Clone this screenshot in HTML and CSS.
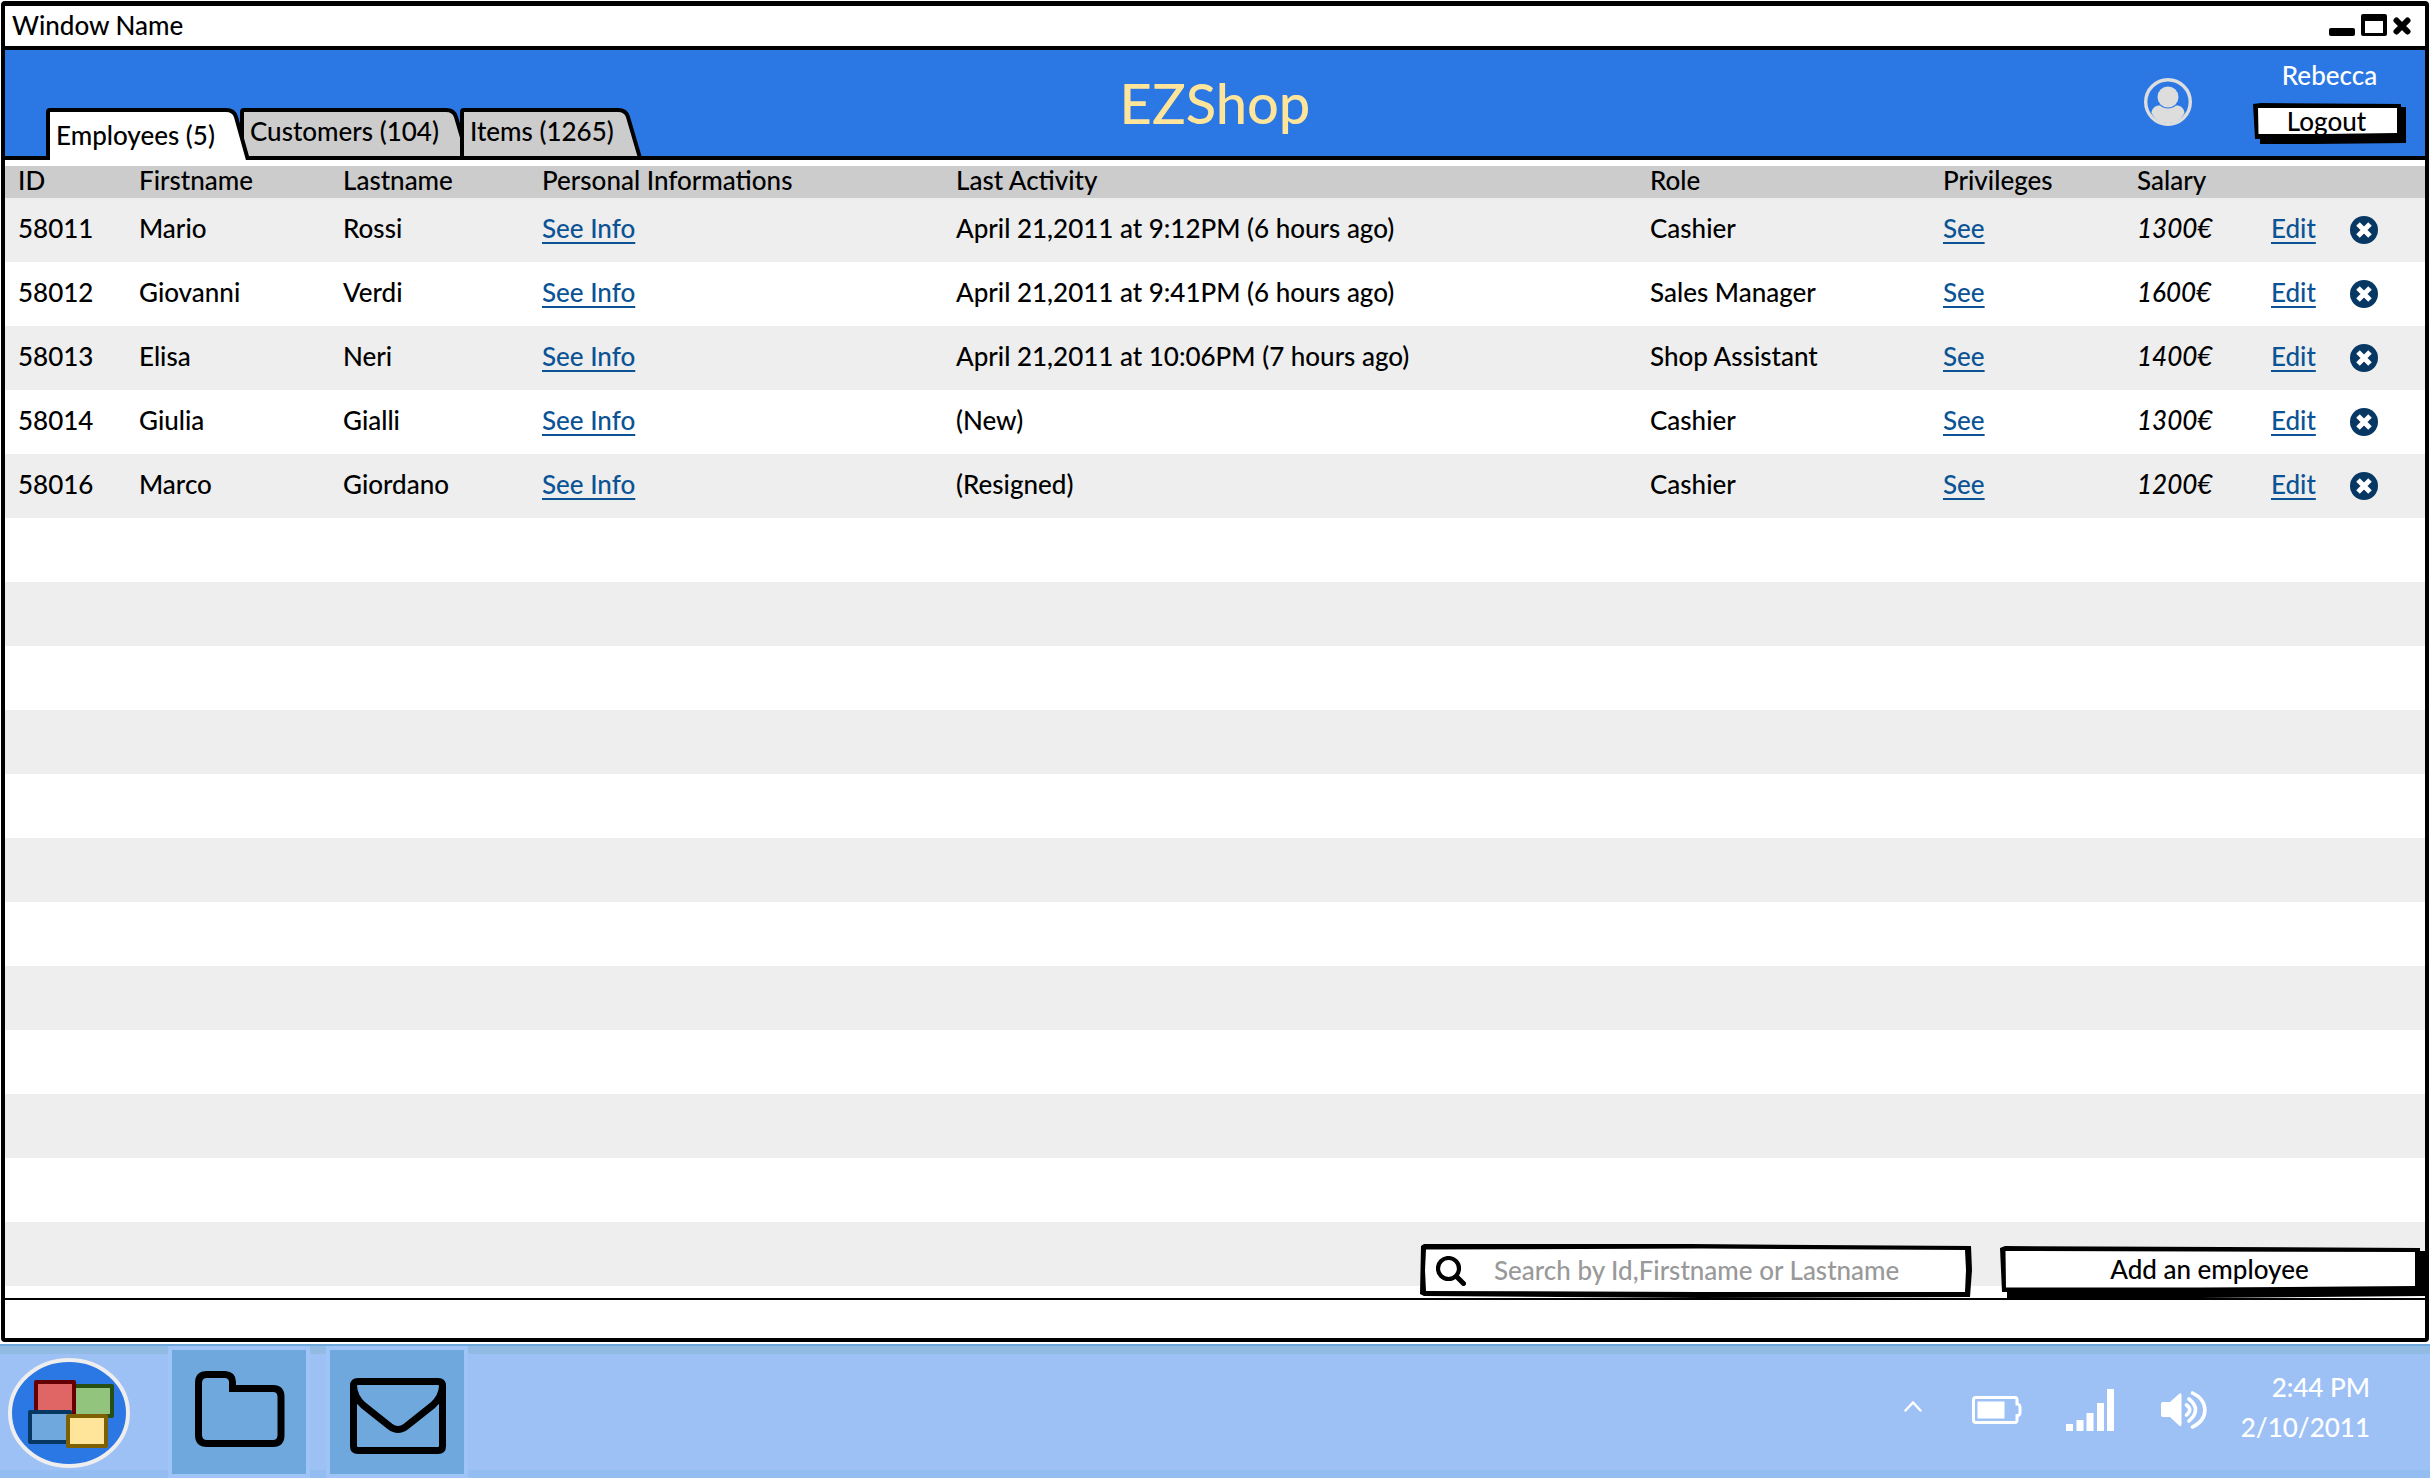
FILE: index.html
```html
<!DOCTYPE html>
<html lang="en">
<head>
<meta charset="utf-8">
<meta name="viewport" content="width=device-width, initial-scale=1">
<title>EZShop</title>
<link rel="stylesheet" href="styles.css">
</head>
<body>
<div class="window">
  <header class="titlebar">
    <span>Window Name</span>
    <div class="controls">
      <button type="button" aria-label="Minimize"><svg width="26" height="22" viewBox="0 0 26 22"><rect y="14" width="26" height="8" rx="2"/></svg></button>
      <button type="button" aria-label="Maximize"><svg width="26" height="22" viewBox="0 0 26 22"><path fill-rule="evenodd" d="M2 0H24Q26 0 26 2V20Q26 22 24 22H2Q0 22 0 20V2Q0 0 2 0ZM4 7V19H22V7Z"/></svg></button>
      <button type="button" aria-label="Close"><svg width="18" height="22" viewBox="0 0 18 22"><path d="M3.500 6.500L14.500 17.500M14.500 6.500L3.500 17.500" fill="none" stroke="#000" stroke-width="6" stroke-linecap="round"/></svg></button>
    </div>
  </header>

  <div class="appbar">
    <nav class="tabs">
      <a class="tab active" href="#employees"><svg class="shape" viewBox="0 0 204 52" preserveAspectRatio="none"><path d="M2 52V4Q2 2 4 2H180Q188 2 190 9L202 52" fill="#fff" stroke="#000" stroke-width="4"/></svg><span>Employees (5)</span></a>
      <a class="tab tab-customers" href="#customers"><svg class="shape" viewBox="0 0 230 52" preserveAspectRatio="none"><path d="M2 50V4Q2 2 4 2H206Q214 2 216 9L228 50Z" fill="#ccc" stroke="#000" stroke-width="4"/></svg><span>Customers (104)</span></a>
      <a class="tab tab-items" href="#items"><svg class="shape" viewBox="0 0 182 52" preserveAspectRatio="none"><path d="M2 50V4Q2 2 4 2H158Q166 2 168 9L180 50Z" fill="#ccc" stroke="#000" stroke-width="4"/></svg><span>Items (1265)</span></a>
    </nav>
    <h1>EZShop</h1>
    <div class="user">
      <svg class="avatar" width="48" height="48" viewBox="0 0 48 48"><circle cx="24" cy="24" r="22.300" fill="none" stroke="#ddd" stroke-width="3.400"/><circle cx="24" cy="19" r="10.500" fill="#ddd"/><path d="M7.500 35C8 30 11 27.500 16 27.500C20 31.500 28 31.500 32 27.500C37 27.500 40 30 40.500 35C37 42 31 45 24 45S11 42 7.500 35Z" fill="#ddd"/></svg>
      <div class="account">
        <span>Rebecca</span>
        <button type="button" class="sketch logout"><svg class="shape" viewBox="0 0 153 41" preserveAspectRatio="none"><path d="M7 4H153V40L60 41H7Z"/><path d="M0 1L8 0L148 1V35L2 36Z"/><path d="M5 5L144 5V30L70 31H5.500Z" fill="#fff"/></svg><span>Logout</span></button>
      </div>
    </div>
  </div>

  <main class="content">
    <table>
      <colgroup><col class="c-id"><col class="c-first"><col class="c-last"><col class="c-info"><col><col class="c-role"><col class="c-priv"><col class="c-salary"><col class="c-edit"><col class="c-delete"></colgroup>
      <thead><tr><th>ID</th><th>Firstname</th><th>Lastname</th><th>Personal Informations</th><th>Last Activity</th><th>Role</th><th>Privileges</th><th>Salary</th><th></th><th></th></tr></thead>
      <tbody>
        <tr><td>58011</td><td>Mario</td><td>Rossi</td><td><a href="#info">See Info</a></td><td>April 21,2011 at 9:12PM (6 hours ago)</td><td>Cashier</td><td><a href="#priv">See</a></td><td><em>1300€</em></td><td><a href="#edit">Edit</a></td><td><button type="button" class="delete" aria-label="Delete"><svg width="28" height="28" viewBox="0 0 28 28"><circle cx="14" cy="14" r="14"/><path d="M8 8L20 20M20 8L8 20"/></svg></button></td></tr>
        <tr><td>58012</td><td>Giovanni</td><td>Verdi</td><td><a href="#info">See Info</a></td><td>April 21,2011 at 9:41PM (6 hours ago)</td><td>Sales Manager</td><td><a href="#priv">See</a></td><td><em>1600€</em></td><td><a href="#edit">Edit</a></td><td><button type="button" class="delete" aria-label="Delete"><svg width="28" height="28" viewBox="0 0 28 28"><circle cx="14" cy="14" r="14"/><path d="M8 8L20 20M20 8L8 20"/></svg></button></td></tr>
        <tr><td>58013</td><td>Elisa</td><td>Neri</td><td><a href="#info">See Info</a></td><td>April 21,2011 at 10:06PM (7 hours ago)</td><td>Shop Assistant</td><td><a href="#priv">See</a></td><td><em>1400€</em></td><td><a href="#edit">Edit</a></td><td><button type="button" class="delete" aria-label="Delete"><svg width="28" height="28" viewBox="0 0 28 28"><circle cx="14" cy="14" r="14"/><path d="M8 8L20 20M20 8L8 20"/></svg></button></td></tr>
        <tr><td>58014</td><td>Giulia</td><td>Gialli</td><td><a href="#info">See Info</a></td><td>(New)</td><td>Cashier</td><td><a href="#priv">See</a></td><td><em>1300€</em></td><td><a href="#edit">Edit</a></td><td><button type="button" class="delete" aria-label="Delete"><svg width="28" height="28" viewBox="0 0 28 28"><circle cx="14" cy="14" r="14"/><path d="M8 8L20 20M20 8L8 20"/></svg></button></td></tr>
        <tr><td>58016</td><td>Marco</td><td>Giordano</td><td><a href="#info">See Info</a></td><td>(Resigned)</td><td>Cashier</td><td><a href="#priv">See</a></td><td><em>1200€</em></td><td><a href="#edit">Edit</a></td><td><button type="button" class="delete" aria-label="Delete"><svg width="28" height="28" viewBox="0 0 28 28"><circle cx="14" cy="14" r="14"/><path d="M8 8L20 20M20 8L8 20"/></svg></button></td></tr>
      </tbody>
    </table>
    <div class="empty-rows">
      <div class="search">
        <svg class="shape" viewBox="0 0 552 54" preserveAspectRatio="none"><path d="M1 2L4 0H270L551 2L552 26L550 53L280 54L4 52L0 50Z"/><path d="M6 5.500L280 4.500L545 6L546 26L545 48H280L6 47L5 26Z" fill="#fff"/></svg>
        <svg class="glass" width="30" height="30" viewBox="0 0 30 30" fill="none" stroke="#000"><circle cx="12.500" cy="12.500" r="10.500" stroke-width="4.200"/><path d="M20.500 20.500L27.500 27.500" stroke-width="5" stroke-linecap="round"/></svg>
        <input type="text" aria-label="Search employees" placeholder="Search by Id,Firstname or Lastname">
      </div>
      <button type="button" class="sketch add"><svg class="shape" viewBox="0 0 425 52" preserveAspectRatio="none"><path d="M7 5H425V50L200 52H7Z"/><path d="M0 2L5 0L420 2V44L2 46Z"/><path d="M5.500 5L415 6V40L200 41.500H6Z" fill="#fff"/></svg><span>Add an employee</span></button>
    </div>
  </main>
  <footer class="statusbar"></footer>
</div>

<div class="taskbar">
  <button type="button" class="start" aria-label="Start"><svg width="122" height="110" viewBox="0 0 122 110"><ellipse cx="61" cy="55" rx="59" ry="53" fill="#2b78e4" stroke="#eee" stroke-width="4"/><g stroke-width="4" stroke-linejoin="round"><rect x="64" y="28" width="40" height="30" fill="#93c47d" stroke="#274e13"/><rect x="28" y="24" width="38" height="32" fill="#e06666" stroke="#660000"/><rect x="22" y="54" width="40" height="30" fill="#6fa8dc" stroke="#073763"/><rect x="60" y="58" width="38" height="30" fill="#ffe599" stroke="#7f6000"/></g></svg></button>
  <button type="button" class="tile" aria-label="Files"><svg width="90" height="76" viewBox="0 0 90 76"><path d="M12 3.500H30Q37.500 4 37.500 11V17.500H78Q86 17.500 86 26V64Q86 72.500 78 72.500H12Q3.500 72.500 3.500 64V12Q3.500 3.500 12 3.500Z"/></svg></button>
  <button type="button" class="tile tile-mail" aria-label="Mail"><svg width="96" height="76" viewBox="0 0 96 76"><path d="M8 3.500H88Q92.500 3.500 92.500 8V68Q92.500 72.500 88 72.500H8Q3.500 72.500 3.500 68V8Q3.500 3.500 8 3.500ZM3.500 8Q4 19 13 27L40 48.500Q48 54.500 56 48.500L83 27Q92 19 92.500 8"/></svg></button>
  <div class="tray">
    <svg class="more" width="18" height="12" viewBox="0 0 18 12"><path d="M1.500 10.500L9 2.500L16.500 10.500" fill="none" stroke="#fff" stroke-width="2.400" stroke-linecap="round"/></svg>
    <svg class="battery" width="50" height="28" viewBox="0 0 50 28"><path d="M4 1.500H43Q45 1.500 45 4V8H46Q48 9 48 11V17Q48 19 46 19.500H45V24Q45 26.500 43 26.500H4Q1.500 26.500 1.500 24V4Q1.500 1.500 4 1.500Z" fill="none" stroke="#fff" stroke-width="3"/><rect x="5.500" y="5.500" width="27" height="17" fill="#fff"/></svg>
    <svg class="signal" width="48" height="42" viewBox="0 0 48 42" fill="#fff"><rect y="35" width="7" height="7"/><rect x="10.500" y="31" width="7" height="11"/><rect x="20.500" y="24" width="7" height="18"/><rect x="31" y="14" width="7" height="28"/><rect x="41" width="7" height="42"/></svg>
    <svg class="speaker" width="46" height="38" viewBox="0 0 46 38"><path d="M1.500 11H9L18 3Q20.500 1 20.500 4V33Q20.500 36.500 18 34.500L9 26H1.500Q0 26 0 24V13Q0 11 1.500 11Z" fill="#fff"/><path d="M25.500 14Q32 18.500 25.500 24M28 8Q41 18.500 28 30M31.500 2C48 10 48 28 31.500 36" fill="none" stroke="#fff" stroke-width="3.600" stroke-linecap="round"/></svg>
    <div class="clock"><time>2:44 PM</time><time>2/10/2011</time></div>
  </div>
</div>
</body>
</html>
```
FILE: styles.css
```css
* { box-sizing: border-box; }

body {
  margin: 0;
  min-height: 100vh;
  display: flex;
  flex-direction: column;
  background: #fff;
  color: #000;
  font: 500 26px/32px Lato, "Noto Sans", sans-serif;
}

button {
  padding: 0;
  border: 0;
  background: none;
  color: inherit;
  font: inherit;
  cursor: pointer;
}

svg { display: block; flex: none; }

/* outline that fills the control it belongs to */
.shape {
  position: absolute;
  inset: 0;
  width: 100%;
  height: 100%;
}
.shape + span { position: relative; }

/* window frame */
.window {
  flex: 1;
  display: flex;
  flex-direction: column;
  margin: 1px 1px 2px;
  border: 4px solid #000;
  border-top-width: 5px;
  border-radius: 4px;
}

.titlebar {
  display: flex;
  align-items: flex-start;
  justify-content: space-between;
  height: 44px;
  padding: 3px 14px 0 7px;
  border-bottom: 4px solid #000;
}
.controls { display: flex; gap: 6px; padding-top: 5px; }

.appbar {
  display: grid;
  grid-template-columns: 1fr auto 1fr;
  height: 110px;
  border-bottom: 4px solid #000;
  background: #2b78e4;
}

.tabs {
  display: flex;
  align-self: end;
  margin: 0 0 -4px 41px;
}
.tab {
  position: relative;
  width: 204px;
  height: 52px;
  padding: 7px 0 0 10px;
  color: #000;
  text-decoration: none;
  white-space: nowrap;
}
.tab.active { z-index: 1; padding-top: 11px; }
.tab-customers { width: 230px; margin-left: -10px; }
.tab-items { width: 182px; margin-left: -10px; }

h1 {
  margin: 0;
  align-self: center;
  color: #ffe599;
  font-size: 56px;
  font-weight: 500;
  line-height: 64px;
}

.user {
  display: flex;
  justify-content: flex-end;
  align-items: flex-start;
  gap: 61px;
  padding-right: 19px;
}
.avatar { margin-top: 28px; }
.account {
  display: flex;
  flex-direction: column;
  align-items: center;
  gap: 12px;
  padding-top: 9px;
  color: #fff;
}

.sketch { position: relative; }
.logout {
  width: 153px;
  height: 41px;
  padding: 0 6px 6px 0;
  color: #000;
}

/* employee list */
.content {
  flex: 1;
  display: flex;
  flex-direction: column;
  padding-top: 6px;
}
table {
  width: 100%;
  border-collapse: collapse;
  table-layout: fixed;
}
.c-id { width: 121px; }
.c-first { width: 204px; }
.c-last { width: 199px; }
.c-info { width: 414px; }
.c-role { width: 293px; }
.c-priv { width: 194px; }
.c-salary { width: 134px; }
.c-edit { width: 79px; }
.c-delete { width: 88px; }
th, td {
  padding: 0 0 0 13px;
  text-align: left;
  font-weight: 500;
  white-space: nowrap;
}
th { height: 32px; padding-bottom: 4px; line-height: 28px; background: #ccc; }
td { height: 64px; padding-bottom: 4px; }
tbody tr:nth-child(odd) { background: #eee; }
td a {
  color: #0b5394;
  text-decoration-thickness: 2px;
  text-underline-offset: 4px;
}
.delete { display: block; margin-top: 4px; }
.delete circle { fill: #073763; }
.delete path {
  fill: none;
  stroke: #fff;
  stroke-width: 5;
}

.empty-rows {
  flex: 1;
  display: flex;
  justify-content: flex-end;
  align-items: flex-end;
  gap: 28px;
  background: repeating-linear-gradient(#fff 0 64px, #eee 64px 128px);
}
.search {
  position: relative;
  display: flex;
  align-items: center;
  gap: 28px;
  width: 552px;
  height: 54px;
  padding: 0 16px 2px;
}
.glass { position: relative; margin-top: 2px; }
.search input {
  position: relative;
  flex: 1;
  min-width: 0;
  padding: 0;
  border: 0;
  outline: 0;
  background: none;
  color: #000;
  font: inherit;
}
.search input::placeholder { color: #999; opacity: 1; }
.add {
  width: 425px;
  height: 52px;
  padding: 0 6px 6px 0;
}

.statusbar {
  height: 40px;
  border-top: 2px solid #000;
}

/* desktop taskbar */
.taskbar {
  display: flex;
  align-items: flex-start;
  height: 134px;
  padding: 2px 60px 0 8px;
  background: linear-gradient(#6fa8dc 0 2px, #92bbe4 2px 10px, #9ec1f5 10px 126px, #94bef2 126px);
}
.start { margin: 12px 38px 0 0; }
.tile {
  display: grid;
  justify-content: center;
  align-content: start;
  width: 142px;
  height: 132px;
  margin-right: 16px;
  padding: 21px 0 0 2px;
  border: 4px solid #9fc5f8;
  background: #6fa8dc;
}
.tile-mail { padding-top: 28px; }
.tile path {
  fill: none;
  stroke: #000;
  stroke-width: 7;
}

.tray {
  display: flex;
  align-items: center;
  height: 128px;
  margin-left: auto;
  color: #fff;
}
.more { margin-bottom: 8px; }
.battery { margin-left: 50px; }
.signal { margin-left: 44px; }
.speaker { margin-left: 47px; }
.clock {
  display: flex;
  flex-direction: column;
  align-items: flex-end;
  gap: 8px;
  margin-left: 34px;
  padding-bottom: 6px;
}
```
